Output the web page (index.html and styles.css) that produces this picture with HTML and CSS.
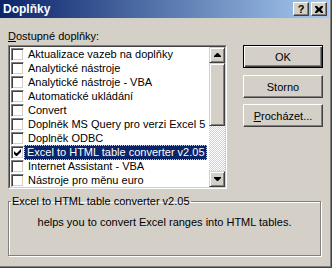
FILE: index.html
```html
<!DOCTYPE html>
<html>
  <head>
    <title>Doplňky</title>
    <link rel="stylesheet" href="styles.css">
  </head>
  <body>
    <div class="window">
      <div class="titlebar">
        <span class="title">Doplňky</span>
        <div class="capbtns">
          <div class="capbtn help">?</div>
          <div class="capbtn"><svg width="8" height="7" viewBox="0 0 8 7"><path d="M0 0h2l2 2 2-2h2v1l-2 2.5 2 2.5v1h-2l-2-2-2 2h-2v-1l2-2.5-2-2.5z" fill="#000"/></svg></div>
        </div>
      </div>
      <div class="content">
        <div class="top">
          <div class="left">
            <div class="label"><u>D</u>ostupné doplňky:</div>
            <div class="listbox">
              <div class="listbox-in">
                <div class="items">
                  <div class="row"><span class="chk"></span><span class="txt">Aktualizace vazeb na doplňky</span></div>
                  <div class="row"><span class="chk"></span><span class="txt">Analytické nástroje</span></div>
                  <div class="row"><span class="chk"></span><span class="txt">Analytické nástroje - VBA</span></div>
                  <div class="row"><span class="chk"></span><span class="txt">Automatické ukládání</span></div>
                  <div class="row"><span class="chk"></span><span class="txt">Convert</span></div>
                  <div class="row"><span class="chk"></span><span class="txt">Doplněk MS Query pro verzi Excel 5</span></div>
                  <div class="row"><span class="chk"></span><span class="txt">Doplněk ODBC</span></div>
                  <div class="row sel"><span class="chk"><svg width="7" height="7" viewBox="0 0 7 7"><path d="M0 2v3l2 2h1l4-4v-3l-4 4h-1z" fill="#000"/></svg></span><span class="txt">Excel to HTML table converter v2.05</span></div>
                  <div class="row"><span class="chk"></span><span class="txt">Internet Assistant - VBA</span></div>
                  <div class="row"><span class="chk"></span><span class="txt">Nástroje pro měnu euro</span></div>
                </div>
                <div class="scrollbar">
                  <div class="sbtn"><svg width="7" height="4" viewBox="0 0 7 4"><path d="M3 0h1l3 3v1h-7v-1z" fill="#000"/></svg></div>
                  <div class="thumb"></div>
                  <div class="track"></div>
                  <div class="sbtn"><svg width="7" height="4" viewBox="0 0 7 4"><path d="M0 0h7v1l-3 3h-1l-3-3z" fill="#000"/></svg></div>
                </div>
              </div>
            </div>
          </div>
          <div class="buttons">
            <div class="btn default"><span>OK</span></div>
            <div class="btn storno"><span>Storno</span></div>
            <div class="btn"><span><u>P</u>rocházet...</span></div>
          </div>
        </div>
        <fieldset class="group">
          <legend>Excel to HTML table converter v2.05</legend>
          <p class="desc">helps you to convert Excel ranges into HTML tables.</p>
        </fieldset>
      </div>
    </div>
  </body>
</html>
```

FILE: styles.css
```css
body {margin: 0; background: #d4d0c8; font-family: "Liberation Sans", Arial, sans-serif; font-size: 11px; color: #000; overflow: hidden;}
.window {width: 332px; height: 268px; box-sizing: border-box; border-right: 1px solid #404040; border-bottom: 1px solid #404040; box-shadow: inset -1px -1px 0 #808080; padding-right: 2px; background: #d4d0c8;}

/* title bar */
.titlebar {height: 18px; display: flex; align-items: center; background: linear-gradient(to right, #0a246a, #a6caf0); padding-left: 3px;}
.title {color: #fff; font-weight: bold; font-size: 12px;}
.capbtns {margin-left: auto; display: flex; gap: 2px; margin-right: 2px;}
.capbtn {width: 14px; height: 12px; background: #d4d0c8; border: 1px solid; border-color: #fff #404040 #404040 #fff; box-shadow: inset -1px -1px 0 #808080; display: flex; align-items: center; justify-content: center;}
.capbtn.help {font-weight: bold; font-size: 11px; line-height: 12px;}

.content {padding: 12px 0 0 8px;}
.top {display: flex;}
.left {width: 219px;}
.label {height: 13px; line-height: 13px; margin-bottom: 2px;}

/* list box */
.listbox {border: 1px solid; border-color: #808080 #fff #fff #808080;}
.listbox-in {border: 1px solid; border-color: #404040 #d4d0c8 #d4d0c8 #404040; background: #fff; display: flex; height: 140px;}
.items {flex: 1;}
.row {height: 14px; display: flex; align-items: center;}
.chk {width: 9px; height: 9px; margin-left: 1px; background: #fff; border: 1px solid; border-color: #808080 #fff #fff #808080; box-shadow: inset 1px 1px 0 #404040, inset -1px -1px 0 #d4d0c8; padding: 1px; display: flex; align-items: center; justify-content: center; flex: none;}
.txt {margin-left: 1px; padding: 0 2px; height: 13px; line-height: 13px; white-space: nowrap; border: 1px dotted transparent;}
.sel .txt {background: #0a246a; color: #fff; border-color: #d4d0c8; margin-left: 0; padding-right: 1px;}
.scrollbar {width: 16px; display: flex; flex-direction: column;}
.sbtn, .thumb {box-sizing: border-box; background: #d4d0c8; border: 1px solid; border-color: #d4d0c8 #404040 #404040 #d4d0c8; box-shadow: inset 1px 1px 0 #fff, inset -1px -1px 0 #808080;}
.sbtn {height: 16px; display: flex; align-items: center; justify-content: center;}
.thumb {height: 63px;}
.track {flex: 1; background: repeating-conic-gradient(#fff 0 25%, #d4d0c8 0 50%) 0 0 / 2px 2px;}

/* buttons */
.buttons {margin-left: 16px; padding-top: 15px; display: flex; flex-direction: column; gap: 6px;}
.btn {width: 80px; height: 23px; box-sizing: border-box; border: 1px solid; border-color: #fff #404040 #404040 #fff; box-shadow: inset -1px -1px 0 #808080; display: flex; align-items: center; justify-content: center;}
.btn.storno {margin-top: 1px;}
.btn.default {border: 1px solid #000; box-shadow: inset 1px 1px 0 #fff, inset -1px -1px 0 #404040, inset -2px -2px 0 #808080;}

/* group box */
.group {margin: 6px 0 0 0; width: 313px; height: 61px; box-sizing: border-box; padding: 0; border: 1px solid #808080; box-shadow: inset 1px 1px 0 #fff, 1px 1px 0 #fff;}
.group legend {padding: 0 1px; margin-left: 2px; line-height: 13px;}
.desc {margin: 8px 0 0 0; text-align: center; line-height: 13px;}
```
